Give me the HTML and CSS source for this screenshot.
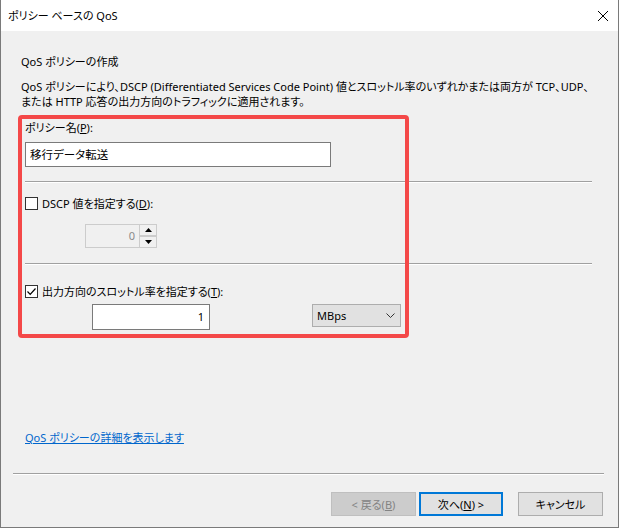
FILE: index.html
```html
<!DOCTYPE html>
<html lang="ja">
<head>
<meta charset="utf-8">
<title>ポリシー ベースの QoS</title>
<link rel="stylesheet" href="styles.css">
</head>
<body>
<div class="window">
  <div class="titlebar">
    <span class="title">ポリシー ベースの QoS</span>
    <svg class="close" width="12" height="12" viewBox="0 0 12 12"><path d="M1 1 L11 11 M11 1 L1 11" stroke="#000" stroke-width="1"/></svg>
  </div>
  <div class="content">
    <div class="heading">QoS ポリシーの作成</div>
    <div class="desc">QoS ポリシーにより、DSCP (Differentiated Services Code Point) 値とスロットル率のいずれかまたは両方が TCP、UDP、<br>または HTTP 応答の出力方向のトラフィックに適用されます。</div>
    <div class="form">
      <div class="label">ポリシー名(<u>P</u>):</div>
      <div class="textbox name">移行データ転送</div>
      <div class="sep"></div>
      <div class="check-row">
        <span class="checkbox"></span>
        <span class="check-label">DSCP 値を指定する(<u>D</u>):</span>
      </div>
      <div class="spin">
        <div class="spin-value">0</div>
        <div class="spin-buttons">
          <div class="spin-btn"><svg width="7" height="4" viewBox="0 0 7 4"><path d="M3.5 0 L7 4 L0 4 Z" fill="#000"/></svg></div>
          <div class="spin-btn"><svg width="7" height="4" viewBox="0 0 7 4"><path d="M0 0 L7 0 L3.5 4 Z" fill="#000"/></svg></div>
        </div>
      </div>
      <div class="sep sep2"></div>
      <div class="check-row check2">
        <span class="checkbox checked"><svg width="11" height="11" viewBox="0 0 11 11"><path d="M1.5 5.5 L4.2 8.3 L9.5 2.5" fill="none" stroke="#000" stroke-width="1.2"/></svg></span>
        <span class="check-label">出力方向のスロットル率を指定する(<u>T</u>):</span>
      </div>
      <div class="rate-row">
        <div class="textbox rate">1</div>
        <div class="combo">
          <span>MBps</span>
          <svg width="9" height="5" viewBox="0 0 9 5"><path d="M0.5 0.5 L4.5 4.5 L8.5 0.5" fill="none" stroke="#333" stroke-width="1"/></svg>
        </div>
      </div>
    </div>
    <div class="spacer"></div>
    <a class="link" href="#">QoS ポリシーの詳細を表示します</a>
    <div class="sep bottom-sep"></div>
    <div class="buttons">
      <div class="btn disabled">&lt; 戻る(<u>B</u>)</div>
      <div class="btn default">次へ(<u>N</u>) &gt;</div>
      <div class="btn cancel">キャンセル</div>
    </div>
  </div>
  <div class="highlight"></div>
</div>
</body>
</html>
```

FILE: styles.css
```css
html, body {
  margin: 0;
  padding: 0;
}
body {
  width: 619px;
  height: 528px;
  overflow: hidden;
  font-family: "Noto Sans", "Noto Sans CJK JP", sans-serif;
  font-size: 11px;
  font-feature-settings: "palt" 1;
  color: #000;
  background: #f0f0f0;
}
.window {
  position: relative;
  width: 619px;
  height: 528px;
  box-sizing: border-box;
  border-left: 1px solid #7a7a7a;
  border-right: 1px solid #7a7a7a;
  border-bottom: 1px solid #7a7a7a;
  background: #f0f0f0;
  display: flex;
  flex-direction: column;
}
.titlebar {
  height: 31px;
  background: #fff;
  display: flex;
  align-items: center;
  justify-content: space-between;
  padding: 0 8px 0 7px;
  flex: none;
}
.title {
  line-height: 16px;
}
.close {
  margin-right: 1px;
}
.content {
  flex: 1;
  display: flex;
  flex-direction: column;
  padding: 0 13px 0 20px;
}
.heading {
  margin-top: 23px;
  line-height: 16px;
}
.desc {
  margin-top: 9px;
  line-height: 15px;
  white-space: nowrap;
}
.form {
  padding-left: 4px;
  display: flex;
  flex-direction: column;
}
.label {
  margin-top: 11px;
  line-height: 15px;
}
u {
  text-decoration: underline;
  text-underline-offset: 1px;
}
.textbox {
  box-sizing: border-box;
  background: #fff;
  border: 1px solid #7a7a7a;
}
.name {
  margin-top: 7px;
  width: 306px;
  height: 25px;
  padding-left: 4px;
  font-size: 11.5px;
  line-height: 23px;
}
.sep {
  height: 1px;
  background: #a0a0a0;
  border-bottom: 1px solid #fff;
  margin-top: 14px;
  margin-right: 13px;
}
.check-row {
  display: flex;
  align-items: center;
  margin-top: 13px;
  height: 15px;
}
.checkbox {
  width: 13px;
  height: 13px;
  box-sizing: border-box;
  border: 1px solid #333;
  background: #fff;
  display: flex;
  align-items: center;
  justify-content: center;
}
.check-label {
  margin-left: 4px;
  line-height: 15px;
}
.spin {
  margin-top: 13px;
  margin-left: 60px;
  width: 72px;
  height: 24px;
  box-sizing: border-box;
  border: 1px solid #cccccc;
  display: flex;
}
.spin-value {
  flex: 1;
  text-align: right;
  padding-right: 4px;
  line-height: 22px;
  color: #8a8a8a;
}
.spin-buttons {
  width: 16px;
  display: flex;
  flex-direction: column;
  border-left: 1px solid #cccccc;
}
.spin-btn {
  flex: 1;
  display: flex;
  align-items: center;
  justify-content: center;
  background: #f0f0f0;
}
.spin-btn + .spin-btn {
  border-top: 2px solid #cccccc;
}
.sep2 {
  margin-top: 15px;
}
.check2 {
  margin-top: 19px;
}
.rate-row {
  display: flex;
  align-items: flex-start;
  margin-top: 5px;
}
.rate {
  margin-left: 67px;
  width: 118px;
  height: 26px;
  text-align: right;
  padding-right: 5px;
  line-height: 24px;
}
.combo {
  margin-left: 102px;
  width: 89px;
  height: 23px;
  box-sizing: border-box;
  border: 1px solid #adadad;
  background: #e1e1e1;
  display: flex;
  align-items: center;
  justify-content: space-between;
  padding: 0 5px 0 4px;
}
.spacer {
  height: 100px;
}
.link {
  margin-left: 4px;
  color: #0066cc;
  text-decoration: underline;
  line-height: 16px;
  align-self: flex-start;
}
.bottom-sep {
  margin: 27px 1px 0 -8px;
}
.buttons {
  display: flex;
  justify-content: flex-end;
  margin-top: 17px;
  margin-right: 2px;
}
.btn {
  box-sizing: border-box;
  width: 85px;
  height: 24px;
  display: flex;
  align-items: center;
  justify-content: center;
  background: #e1e1e1;
  border: 1px solid #adadad;
}
.btn.disabled {
  background: #cccccc;
  border-color: #bfbfbf;
  color: #838383;
}
.btn.default {
  width: 84px;
  margin-left: 3px;
  border: 2px solid #0078d7;
}
.btn.cancel {
  margin-left: 15px;
}
.highlight {
  position: absolute;
  left: 17px;
  top: 115px;
  width: 391px;
  height: 223px;
  box-sizing: border-box;
  border: 4px solid #f44848;
  border-radius: 4px;
  pointer-events: none;
}
```
